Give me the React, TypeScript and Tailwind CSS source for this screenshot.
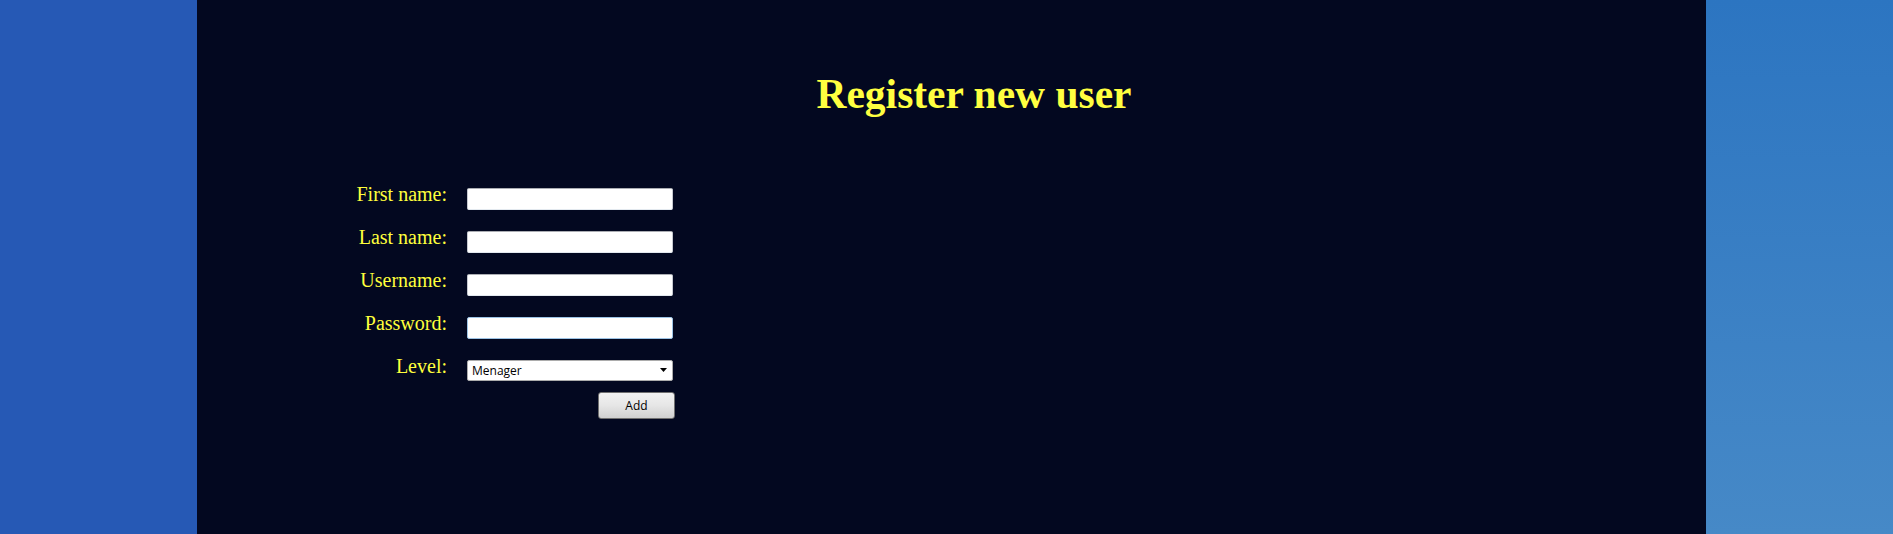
import React from "react";

const fields = [
  { label: "First name:", type: "text", focus: false },
  { label: "Last name:", type: "text", focus: false },
  { label: "Username:", type: "text", focus: false },
  { label: "Password:", type: "password", focus: true },
];

const App = () => {
  return (
    <div className="flex h-screen w-full overflow-hidden">
      {/* wallpaper left */}
      <div className="w-[197px] shrink-0 bg-[#2659b5]" />

      {/* main panel */}
      <div className="w-[1509px] shrink-0 bg-[#030820] font-['Liberation_Serif',serif]">
        <h1 className="mt-[74px] pl-[45px] text-center text-[41.5px] font-bold leading-[41px] text-[#ffff40]">
          Register new user
        </h1>

        <form className="mt-[69px] ml-[100px] flex flex-col gap-[17px]">
          {fields.map((f) => (
            <div key={f.label} className="flex items-start">
              <label className="w-[150px] text-right text-[20px] leading-[20px] text-[#ffff3c]">
                {f.label}
              </label>
              <input
                type={f.type}
                className={`ml-[20px] mt-[4px] block h-[22px] w-[206px] rounded-[2px] border bg-white outline-none ${
                  f.focus
                    ? "border-[#9cc3e5]"
                    : "border-[#c5c8cf] border-t-[#abadb3] border-b-[#e3e9ef]"
                }`}
              />
            </div>
          ))}

          <div className="flex items-start">
            <label className="w-[150px] text-right text-[20px] leading-[20px] text-[#ffff3c]">
              Level:
            </label>
            <div className="relative ml-[20px] mt-[4px] h-[21px] w-[206px]">
              <select
                defaultValue="Menager"
                className="block h-[21px] w-full appearance-none rounded-[2px] border border-[#acacac] bg-white pl-[4px] font-['Open_Sans',sans-serif] text-[12px] leading-[19px] text-black outline-none"
              >
                <option>Menager</option>
                <option>Admin</option>
                <option>User</option>
              </select>
              <svg
                className="pointer-events-none absolute right-[5px] top-[8px]"
                width="8"
                height="5"
                viewBox="0 0 8 5"
              >
                <path d="M0 0 H7 L3.5 4 Z" fill="#000" />
              </svg>
            </div>
          </div>

          <div className="-mt-[6px] flex w-[378px] justify-end">
            <button
              type="button"
              className="block h-[27px] w-[77px] rounded-[3px] border border-[#707070] bg-gradient-to-b from-[#f2f2f2] via-[#e6e6e6] to-[#d0d0d0] font-['Open_Sans',sans-serif] text-[12px] text-black"
            >
              Add
            </button>
          </div>
        </form>
      </div>

      {/* wallpaper right */}
      <div className="flex-1 bg-gradient-to-b from-[#2c75c1] to-[#4689c7]" />
    </div>
  );
};

export default App;
